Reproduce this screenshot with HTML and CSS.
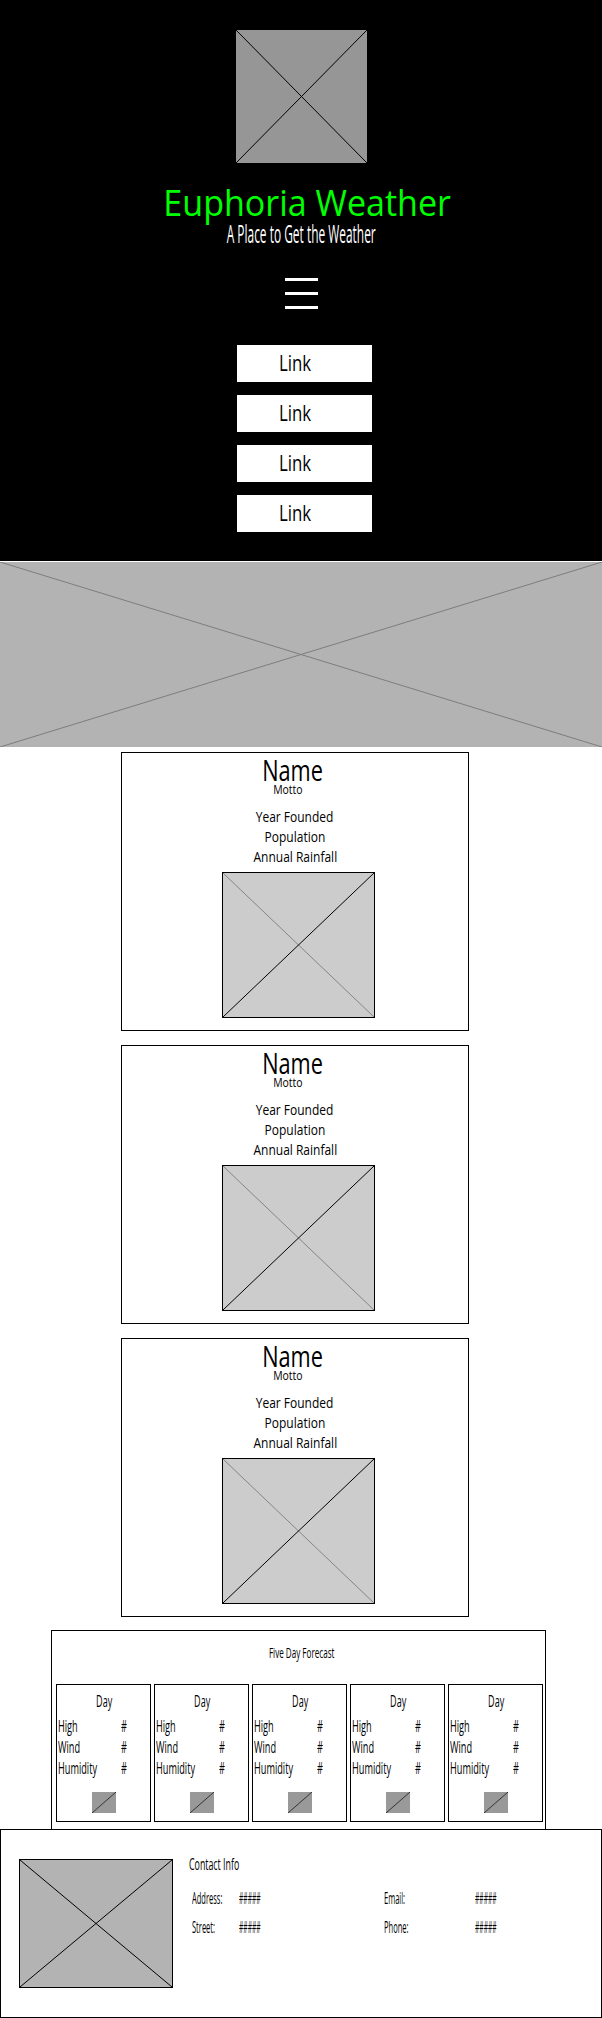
FILE: index.html
```html
<!DOCTYPE html>
<html lang="en">
<head>
<meta charset="utf-8">
<title>Euphoria Weather</title>
<link rel="stylesheet" href="styles.css">
</head>
<body>
<header class="site-header">
  <div class="logo">
    <svg class="x" viewBox="0 0 100 100" preserveAspectRatio="none"><line x1="0" y1="0" x2="100" y2="100"/><line x1="100" y1="0" x2="0" y2="100"/></svg>
  </div>
  <h1 class="title"><span>Euphoria Weather</span></h1>
  <p class="tagline"><span>A Place to Get the Weather</span></p>
  <button class="menu" type="button" aria-label="Menu"><span></span><span></span><span></span></button>
  <nav class="nav">
    <a class="nav-link" href="#"><span>Link</span></a>
    <a class="nav-link" href="#"><span>Link</span></a>
    <a class="nav-link" href="#"><span>Link</span></a>
    <a class="nav-link" href="#"><span>Link</span></a>
  </nav>
</header>

<div class="hero">
  <svg class="x" viewBox="0 0 100 100" preserveAspectRatio="none"><line x1="0" y1="0" x2="100" y2="100"/><line x1="100" y1="0" x2="0" y2="100"/></svg>
</div>

<main class="cities">
  <article class="city">
    <h2 class="city-name"><span>Name</span></h2>
    <p class="city-motto"><span>Motto</span></p>
    <ul class="city-facts">
      <li><span>Year Founded</span></li>
      <li><span>Population</span></li>
      <li><span>Annual Rainfall</span></li>
    </ul>
    <div class="city-img">
      <svg viewBox="0 0 100 100" preserveAspectRatio="none"><line class="thin" x1="0" y1="0" x2="100" y2="100"/><line x1="0" y1="100" x2="100" y2="0"/></svg>
    </div>
  </article>
  <article class="city">
    <h2 class="city-name"><span>Name</span></h2>
    <p class="city-motto"><span>Motto</span></p>
    <ul class="city-facts">
      <li><span>Year Founded</span></li>
      <li><span>Population</span></li>
      <li><span>Annual Rainfall</span></li>
    </ul>
    <div class="city-img">
      <svg viewBox="0 0 100 100" preserveAspectRatio="none"><line class="thin" x1="0" y1="0" x2="100" y2="100"/><line x1="0" y1="100" x2="100" y2="0"/></svg>
    </div>
  </article>
  <article class="city">
    <h2 class="city-name"><span>Name</span></h2>
    <p class="city-motto"><span>Motto</span></p>
    <ul class="city-facts">
      <li><span>Year Founded</span></li>
      <li><span>Population</span></li>
      <li><span>Annual Rainfall</span></li>
    </ul>
    <div class="city-img">
      <svg viewBox="0 0 100 100" preserveAspectRatio="none"><line class="thin" x1="0" y1="0" x2="100" y2="100"/><line x1="0" y1="100" x2="100" y2="0"/></svg>
    </div>
  </article>
</main>

<section class="forecast">
  <h3 class="forecast-title"><span>Five Day Forecast</span></h3>
  <div class="days">
    <div class="day">
      <div class="day-name"><span>Day</span></div>
      <dl class="day-stats">
        <dt><span>High</span></dt><dd><span>#</span></dd>
        <dt><span>Wind</span></dt><dd><span>#</span></dd>
        <dt><span>Humidity</span></dt><dd><span>#</span></dd>
      </dl>
      <div class="day-icon"><svg viewBox="0 0 100 100" preserveAspectRatio="none"><line x1="0" y1="100" x2="100" y2="0"/></svg></div>
    </div>
    <div class="day">
      <div class="day-name"><span>Day</span></div>
      <dl class="day-stats">
        <dt><span>High</span></dt><dd><span>#</span></dd>
        <dt><span>Wind</span></dt><dd><span>#</span></dd>
        <dt><span>Humidity</span></dt><dd><span>#</span></dd>
      </dl>
      <div class="day-icon"><svg viewBox="0 0 100 100" preserveAspectRatio="none"><line x1="0" y1="100" x2="100" y2="0"/></svg></div>
    </div>
    <div class="day">
      <div class="day-name"><span>Day</span></div>
      <dl class="day-stats">
        <dt><span>High</span></dt><dd><span>#</span></dd>
        <dt><span>Wind</span></dt><dd><span>#</span></dd>
        <dt><span>Humidity</span></dt><dd><span>#</span></dd>
      </dl>
      <div class="day-icon"><svg viewBox="0 0 100 100" preserveAspectRatio="none"><line x1="0" y1="100" x2="100" y2="0"/></svg></div>
    </div>
    <div class="day">
      <div class="day-name"><span>Day</span></div>
      <dl class="day-stats">
        <dt><span>High</span></dt><dd><span>#</span></dd>
        <dt><span>Wind</span></dt><dd><span>#</span></dd>
        <dt><span>Humidity</span></dt><dd><span>#</span></dd>
      </dl>
      <div class="day-icon"><svg viewBox="0 0 100 100" preserveAspectRatio="none"><line x1="0" y1="100" x2="100" y2="0"/></svg></div>
    </div>
    <div class="day">
      <div class="day-name"><span>Day</span></div>
      <dl class="day-stats">
        <dt><span>High</span></dt><dd><span>#</span></dd>
        <dt><span>Wind</span></dt><dd><span>#</span></dd>
        <dt><span>Humidity</span></dt><dd><span>#</span></dd>
      </dl>
      <div class="day-icon"><svg viewBox="0 0 100 100" preserveAspectRatio="none"><line x1="0" y1="100" x2="100" y2="0"/></svg></div>
    </div>
  </div>
</section>

<footer class="footer">
  <div class="footer-img">
    <svg class="x" viewBox="0 0 100 100" preserveAspectRatio="none"><line x1="0" y1="0" x2="100" y2="100"/><line x1="100" y1="0" x2="0" y2="100"/></svg>
  </div>
  <div class="contact">
    <h4 class="contact-title"><span>Contact Info</span></h4>
    <div class="contact-grid">
      <span class="lbl"><span>Address:</span></span>
      <span class="val"><span>#####</span></span>
      <span class="lbl"><span>Email:</span></span>
      <span class="val"><span>#####</span></span>
      <span class="lbl"><span>Street:</span></span>
      <span class="val"><span>#####</span></span>
      <span class="lbl"><span>Phone:</span></span>
      <span class="val"><span>#####</span></span>
    </div>
  </div>
</footer>
</body>
</html>
```

FILE: styles.css
```css
* {
  box-sizing: border-box;
  margin: 0;
  padding: 0;
}

body {
  margin: 0;
  width: 602px;
  background: #fff;
  color: #000;
  font-family: "Open Sans", "Noto Sans", sans-serif;
  font-weight: 400;
}

svg {
  display: block;
  width: 100%;
  height: 100%;
}

svg line {
  stroke: #000;
  stroke-width: 1;
  vector-effect: non-scaling-stroke;
}

/* ---------- header ---------- */
.site-header {
  background: #000;
  height: 561px;
  padding-top: 29px;
  display: flex;
  flex-direction: column;
  align-items: center;
}

.logo {
  width: 133px;
  height: 135px;
  background: #969696;
  border: 1px solid #000;
}

.title {
  margin-top: 21px;
  padding-left: 12px;
  font-size: 36px;
  line-height: 36px;
  font-weight: 400;
  color: #00ff00;
  white-space: nowrap;
}

.title span {
  display: inline-block;
  transform: scaleX(0.945);
}

.tagline {
  font-size: 25px;
  line-height: 25px;
  color: #fff;
  white-space: nowrap;
}

.tagline span {
  display: inline-block;
  transform: scaleX(0.477);
}

.menu {
  margin-top: 32px;
  width: 33px;
  display: flex;
  flex-direction: column;
  gap: 11px;
  background: none;
  border: 0;
  padding: 0;
}

.menu span {
  display: block;
  height: 3px;
  background: #fff;
}

.nav {
  margin-top: 36px;
  padding-left: 7px;
  display: flex;
  flex-direction: column;
  gap: 13px;
}

.nav-link {
  width: 135px;
  height: 37px;
  background: #fff;
  color: #000;
  text-decoration: none;
  display: flex;
  align-items: center;
  padding-left: 42px;
  font-size: 21px;
  line-height: 21px;
}

.nav-link span {
  display: inline-block;
  transform: scaleX(0.8);
  transform-origin: left center;
}

/* ---------- hero ---------- */
.hero {
  height: 186px;
  border-top: 1px solid #fff;
  background: #b3b3b3;
}

.hero svg line {
  stroke: #7d7d7d;
}

/* ---------- cities ---------- */
.cities {
  padding: 5px 0 0 121px;
  display: flex;
  flex-direction: column;
  gap: 14px;
}

.city {
  width: 348px;
  height: 279px;
  border: 1px solid #000;
  padding-top: 2px;
  display: flex;
  flex-direction: column;
  align-items: center;
}

.city-name {
  font-size: 29px;
  line-height: 29px;
  font-weight: 400;
  padding-right: 5px;
  white-space: nowrap;
}

.city-name span {
  display: inline-block;
  transform: scaleX(0.75);
}

.city-motto {
  font-size: 12px;
  line-height: 12px;
  padding-right: 15px;
}

.city-motto span {
  display: inline-block;
  transform: scaleX(0.87);
}

.city-facts {
  list-style: none;
  margin-top: 10px;
  font-size: 15px;
  line-height: 20px;
  text-align: center;
  white-space: nowrap;
}

.city-facts span {
  display: inline-block;
  transform: scaleX(0.8);
}

.city-img {
  margin-top: 6px;
  margin-left: 7px;
  width: 153px;
  height: 146px;
  background: #cccccc;
  border: 1px solid #000;
}

.city-img line.thin {
  stroke: #858585;
}

/* ---------- forecast ---------- */
.forecast {
  margin: 13px 0 0 51px;
  width: 495px;
  border: 1px solid #000;
  border-bottom: 0;
  padding: 14px 2px 7px 4px;
}

.forecast-title {
  font-size: 15px;
  line-height: 15px;
  font-weight: 400;
  text-align: center;
  padding-left: 4px;
  white-space: nowrap;
}

.forecast-title span {
  display: inline-block;
  transform: scaleX(0.54);
}

.days {
  margin-top: 24px;
  display: grid;
  grid-template-columns: repeat(5, 1fr);
  gap: 3.5px;
}

.day {
  height: 138px;
  border: 1px solid #000;
  padding: 7px 0 0 1px;
}

.day-name {
  font-size: 17px;
  line-height: 17px;
  text-align: center;
}

.day-name span {
  display: inline-block;
  transform: scaleX(0.53);
}

.day-stats {
  margin-top: 6px;
  display: grid;
  grid-template-columns: 63px 1fr;
  font-size: 17px;
  line-height: 21px;
  white-space: nowrap;
}

.day-stats dt span,
.day-stats dd span {
  display: inline-block;
  transform: scaleX(0.54);
  transform-origin: left center;
}

.day-icon {
  margin: 14px auto 0;
  width: 24px;
  height: 21px;
  background: #999;
}

.day-icon line {
  stroke: #333;
}

/* ---------- footer ---------- */
.footer {
  height: 189px;
  border: 1px solid #000;
  padding: 25px 0 0 18px;
  display: flex;
  align-items: flex-start;
  gap: 16px;
}

.footer-img {
  margin-top: 4px;
  width: 154px;
  height: 129px;
  flex: none;
  background: #b3b3b3;
  border: 1px solid #000;
}

.contact {
  flex: 1;
}

.contact-title {
  font-size: 17px;
  line-height: 17px;
  font-weight: 400;
  white-space: nowrap;
}

.contact-title span {
  display: inline-block;
  transform: scaleX(0.52);
  transform-origin: left center;
}

.contact-grid {
  margin-top: 12px;
  padding-left: 3px;
  display: grid;
  grid-template-columns: 47px 145px 91px auto;
  font-size: 16px;
  line-height: 29px;
  white-space: nowrap;
}

.contact-grid .lbl span,
.contact-grid .val span {
  display: inline-block;
  transform: scaleX(0.47);
  transform-origin: left center;
}

.contact-grid .val span {
  transform: scaleX(0.42);
}
```
